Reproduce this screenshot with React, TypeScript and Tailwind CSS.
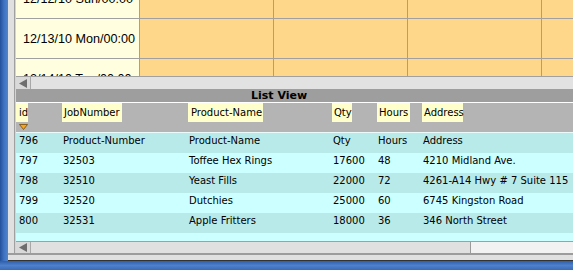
import React from "react";

const rows = [
  ["796", "Product-Number", "Product-Name", "Qty", "Hours", "Address"],
  ["797", "32503", "Toffee Hex Rings", "17600", "48", "4210 Midland Ave."],
  ["798", "32510", "Yeast Fills", "22000", "72", "4261-A14 Hwy # 7 Suite 115"],
  ["799", "32520", "Dutchies", "25000", "60", "6745 Kingston Road"],
  ["800", "32531", "Apple Fritters", "18000", "36", "346 North Street"],
];

const dates = ["12/12/10 Sun/00:00", "12/13/10 Mon/00:00", "12/14/10 Tue/00:00"];

function LeftArrow() {
  return (
    <svg width="8" height="9" viewBox="0 0 8 9">
      <polygon points="0,4.5 8,0 8,9" fill="#6e6e6e" />
    </svg>
  );
}

export default function App() {
  return (
    <div className="w-[573px] h-[270px] overflow-hidden flex flex-col bg-[#3d6ebd] font-['DejaVu_Sans',sans-serif] text-black">
      <div className="flex h-[261px] shrink-0">
        <div className="w-[8px] shrink-0 bg-gradient-to-r from-[#24509a] via-[#3f72c2] to-[#5084cf]" />
        <div className="flex-1 min-w-0 flex flex-col bg-[#e0e0e0]">
          <div className="flex h-[253px] shrink-0">
            <div className="w-[6px] shrink-0" />
            <div className="w-[1px] shrink-0 bg-[#a0a0a0]" />
            <div className="w-[1px] shrink-0 bg-[#d4d4d4]" />
            <div className="flex-1 min-w-0 flex flex-col overflow-hidden">
              {/* Calendar */}
              <div className="h-[76px] shrink-0 overflow-hidden">
                <div className="-mt-[21px] flex flex-col">
                  {dates.map((d) => (
                    <div key={d} className="flex h-[40px] shrink-0 border-b border-[#a0a0a0]">
                      <div className="w-[124px] shrink-0 bg-[#ffffe0] border-r border-[#a0a0a0] flex items-center pl-[7px] pt-[1px] font-['Liberation_Sans',sans-serif] text-[12.6px] whitespace-nowrap">
                        {d}
                      </div>
                      <div className="w-[134px] shrink-0 bg-[#ffd78a] border-r border-[#a0a0a0]" />
                      <div className="w-[134px] shrink-0 bg-[#ffd78a] border-r border-[#a0a0a0]" />
                      <div className="w-[134px] shrink-0 bg-[#ffd78a] border-r border-[#a0a0a0]" />
                      <div className="flex-1 bg-[#ffd78a]" />
                    </div>
                  ))}
                </div>
              </div>
              <div className="h-[1px] shrink-0 bg-[#a0a0a0]" />
              {/* top scrollbar */}
              <div className="h-[12px] shrink-0 flex bg-[#e2e2e2]">
                <div className="w-[15px] shrink-0 border-r border-[#a8a8a8] bg-[#d9d9d9] flex items-center justify-center">
                  <LeftArrow />
                </div>
                <div className="flex-1" />
              </div>
              {/* title */}
              <div className="h-[13px] shrink-0 bg-[#9e9e9e] pl-[235px] text-[11px] font-bold leading-[13px] whitespace-nowrap">
                List View
              </div>
              <div className="h-[1px] shrink-0 bg-white" />
              {/* header */}
              <div className="h-[29px] shrink-0 bg-[#b4b4b4] flex text-[10px] leading-[19px] whitespace-nowrap">
                <div className="w-[46px] shrink-0 flex flex-col">
                  <div className="w-[12px] h-[19px] bg-[#ffffcc] pl-[3px]">id</div>
                  <svg className="mt-[2px] ml-[3px]" width="9" height="6" viewBox="0 0 9 6">
                    <polygon points="0.5,0.5 8.5,0.5 4.5,5.5" fill="#f5a623" stroke="#7a4a00" strokeWidth="0.8" />
                  </svg>
                </div>
                <div className="w-[126px] shrink-0">
                  <div className="w-[60px] h-[19px] bg-[#ffffcc] pl-[2px]">JobNumber</div>
                </div>
                <div className="w-[144px] shrink-0">
                  <div className="w-[75px] h-[19px] bg-[#ffffcc] pl-[3px]">Product-Name</div>
                </div>
                <div className="w-[45px] shrink-0">
                  <div className="w-[20px] h-[19px] bg-[#ffffcc] pl-[2px]">Qty</div>
                </div>
                <div className="w-[45px] shrink-0">
                  <div className="w-[33px] h-[19px] bg-[#ffffcc] pl-[2px]">Hours</div>
                </div>
                <div className="flex-1">
                  <div className="w-[41px] h-[19px] bg-[#ffffcc] pl-[2px]">Address</div>
                </div>
              </div>
              <div className="h-[1px] shrink-0 bg-[#eafafa]" />
              {/* rows */}
              {rows.map((r, i) => (
                <div
                  key={r[0]}
                  className={`h-[20px] shrink-0 flex text-[10px] leading-[16px] whitespace-nowrap ${
                    i % 2 === 0 ? "bg-[#b9eaea]" : "bg-[#ccffff]"
                  }`}
                >
                  <div className="w-[46px] shrink-0 pl-[3px]">{r[0]}</div>
                  <div className="w-[126px] shrink-0 pl-[1px]">{r[1]}</div>
                  <div className="w-[144px] shrink-0 pl-[1px]">{r[2]}</div>
                  <div className="w-[45px] shrink-0 pl-[1px]">{r[3]}</div>
                  <div className="w-[45px] shrink-0 pl-[1px]">{r[4]}</div>
                  <div className="flex-1 min-w-0 pl-[1px] overflow-hidden">{r[5]}</div>
                </div>
              ))}
              <div className="h-[8px] shrink-0 bg-[#ccffff]" />
              <div className="h-[1px] shrink-0 bg-[#a0a0a0]" />
              {/* bottom scrollbar */}
              <div className="h-[11px] shrink-0 flex bg-[#f2f2f2]">
                <div className="w-[15px] shrink-0 border-r border-[#a8a8a8] bg-[#d9d9d9] flex items-center justify-center">
                  <LeftArrow />
                </div>
                <div className="w-[440px] shrink-0 bg-[#e0e0e0] border-r border-[#9a9a9a]" />
                <div className="flex-1" />
              </div>
            </div>
          </div>
          <div className="h-[2px] shrink-0 bg-[#9c9c9c]" />
          <div className="h-[5px] shrink-0 bg-[#e0e0e0]" />
          <div className="h-[1px] shrink-0 bg-[#333333]" />
        </div>
      </div>
      <div className="h-[9px] shrink-0 bg-gradient-to-b from-[#2f5fab] via-[#4e80cb] to-[#3a6bb8]" />
    </div>
  );
}
